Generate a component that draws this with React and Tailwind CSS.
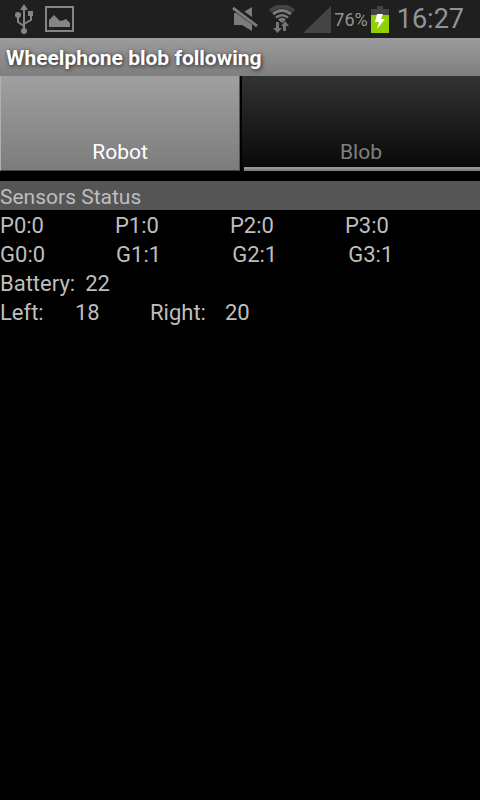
import { useState } from 'react';

const proximity = [0, 0, 0, 0];
const ground = [0, 1, 1, 1];
const battery = 22;
const speed = { left: 18, right: 20 };

const UsbIcon = () => (
  <svg className="w-5 h-[30px]" viewBox="0 0 20 30" fill="none" stroke="#858585" strokeWidth="2">
    <path d="M10 5V26M10 22L4 18V11M10 20L17 16V10" />
    <path d="M10 0L14 6H6Z" fill="#858585" stroke="none" />
    <circle cx="4" cy="11" r="3" fill="#858585" stroke="none" />
    <path d="M14 7H19V12H14Z" fill="#858585" stroke="none" />
    <circle cx="10" cy="27" r="3" fill="#858585" stroke="none" />
  </svg>
);

const PictureIcon = () => (
  <svg className="w-[29px] h-[26px]" viewBox="0 0 29 26">
    <rect x="1" y="1" width="27" height="24" fill="none" stroke="#858585" strokeWidth="2" />
    <path d="M4 21V14L9 9L12 12L15 15L19 14L21 13L25 17V21Z" fill="#858585" />
  </svg>
);

const MutedIcon = () => (
  <svg className="w-[26px] h-6" viewBox="0 0 26 24">
    <path d="M2 6H10L20 0V24L10 18H2Z" fill="#7b7b7b" />
    <path d="M0 -1L27 19" stroke="#1f1f1f" strokeWidth="6" />
    <path d="M1 1L25 19" stroke="#7b7b7b" strokeWidth="3" />
  </svg>
);

const WifiIcon = () => (
  <svg className="w-[26px] h-7" viewBox="0 0 26 28" fill="none">
    <path d="M1 6Q13 -3 25 6" stroke="#444" strokeWidth="4" />
    <path d="M4 9Q13 2 22 9" stroke="#7b7b7b" strokeWidth="3" />
    <path d="M7 12.5Q13 8 19 12.5" stroke="#7b7b7b" strokeWidth="2.5" />
    <path d="M9 14.5Q13 11 17 14.5L13 18Z" fill="#7b7b7b" />
    <path d="M7 17H10V23H13L8.5 28L4 23H7Z" fill="#757575" />
    <path d="M14 26V21H12L16 16L20 21H17V26Z" fill="#757575" />
  </svg>
);

const SignalIcon = () => (
  <svg className="w-7 h-[27px]" viewBox="0 0 28 27">
    <path d="M28 0V27H0Z" fill="#444" />
  </svg>
);

const BatteryIcon = () => (
  <svg className="w-[18px] h-[27px]" viewBox="0 0 18 27">
    <path d="M6 0H12V3H18V9H0V3H6Z" fill="#444" />
    <path d="M0 9H18V27H0Z" fill="#92d000" />
    <path d="M6 8H12L10 13H14L6 23L8 16H4Z" fill="#fff" />
  </svg>
);

const StatusBar = () => (
  <div className="flex items-center justify-between h-[38px] pl-[14px] pr-4 bg-[#1f1f1f] text-[#949494]">
    <div className="flex items-center gap-[11px]">
      <UsbIcon />
      <PictureIcon />
    </div>
    <div className="flex items-center">
      <div className="flex items-center gap-[11px]">
        <MutedIcon />
        <WifiIcon />
      </div>
      <div className="flex items-center ml-2 gap-[3px]">
        <SignalIcon />
        <span className="text-[18px]">76%</span>
        <BatteryIcon />
      </div>
      <time className="ml-2 text-[27px] leading-[38px]">16:27</time>
    </div>
  </div>
);

const Tab = ({ label, active, onClick }) => (
  <button
    type="button"
    role="tab"
    aria-selected={active}
    onClick={onClick}
    className={
      active
        ? 'flex-1 flex flex-col justify-end h-[95px] border-x border-b border-l-[#b0b0b0] border-r-[#555] border-b-[#444] bg-linear-to-b from-[#a0a0a0] to-[#7c7c7c] text-white'
        : 'flex-1 flex flex-col justify-end h-[95px] border-l-2 border-black bg-linear-to-b from-[#333] to-[#080808] text-[#808080]'
    }
  >
    <span className={active ? 'pb-[3px]' : ''}>{label}</span>
    {!active && (
      <span className="block h-1 ml-[2px] border-t-2 border-[#999] bg-[#808080]" />
    )}
  </button>
);

const SensorRow = ({ prefix, values }) => (
  <div className="flex gap-[71px] h-[29px]">
    {values.map((value, i) => (
      <span key={i}>
        {prefix}{i}:{value}
      </span>
    ))}
  </div>
);

const RobotPanel = () => (
  <section className="mt-[10px] leading-[32px] text-[22px]">
    <h2 className="h-[29px] bg-[#555] text-[21px]">Sensors Status</h2>
    <SensorRow prefix="P" values={proximity} />
    <SensorRow prefix="G" values={ground} />
    <div className="flex gap-[10px] h-[29px]">
      <span>Battery:</span>
      <span>{battery}</span>
    </div>
    <div className="flex h-[29px]">
      <span className="w-[75px]">Left:</span>
      <span className="w-[75px]">{speed.left}</span>
      <span className="w-[75px]">Right:</span>
      <span>{speed.right}</span>
    </div>
  </section>
);

const App = () => {
  const [tab, setTab] = useState('Robot');

  return (
    <div className="min-h-screen bg-black text-[#bebebe] text-[21px] leading-[29px] font-[Roboto,sans-serif]">
      <StatusBar />
      <header className="flex items-center h-[38px] px-[6px] pt-[2px] bg-linear-to-b from-[#9c9c9c] to-[#7e7e7e]">
        <h1 className="font-bold text-white [text-shadow:1px_1px_4px_#222]">
          Wheelphone blob following
        </h1>
      </header>
      <div role="tablist" className="flex">
        {['Robot', 'Blob'].map((name) => (
          <Tab key={name} label={name} active={tab === name} onClick={() => setTab(name)} />
        ))}
      </div>
      {tab === 'Robot' && <RobotPanel />}
    </div>
  );
};

export default App;
